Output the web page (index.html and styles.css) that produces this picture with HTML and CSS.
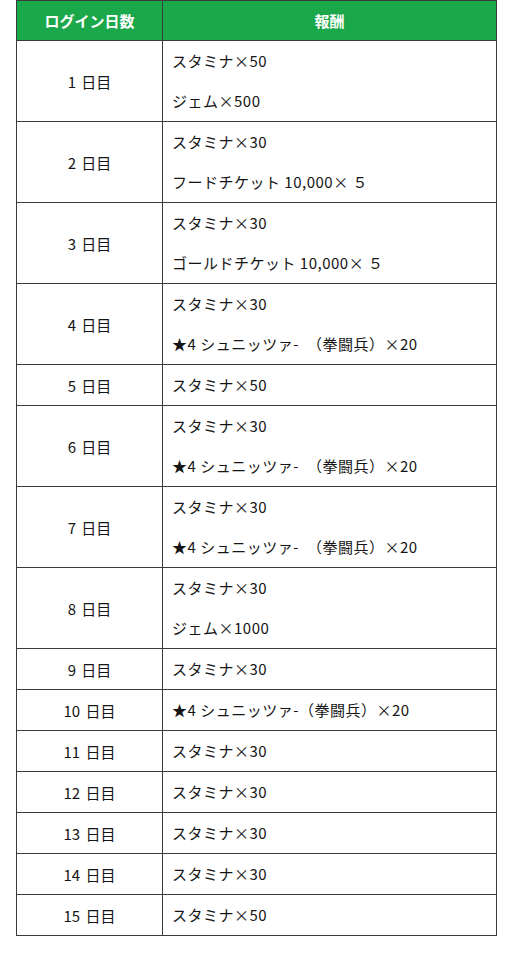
FILE: index.html
```html
<!DOCTYPE html>
<html lang="ja">
<head>
<meta charset="utf-8">
<link rel="stylesheet" href="styles.css">
</head>
<body>
<table class="rewards">
  <thead>
    <tr><th class="day-col">ログイン日数</th><th class="reward-col">報酬</th></tr>
  </thead>
  <tbody>
    <tr><td class="day">1 日目</td><td class="reward"><div class="line">スタミナ×50</div><div class="line">ジェム×500</div></td></tr>
    <tr><td class="day">2 日目</td><td class="reward"><div class="line">スタミナ×30</div><div class="line">フードチケット 10,000× ５</div></td></tr>
    <tr><td class="day">3 日目</td><td class="reward"><div class="line">スタミナ×30</div><div class="line">ゴールドチケット 10,000× ５</div></td></tr>
    <tr><td class="day">4 日目</td><td class="reward"><div class="line">スタミナ×30</div><div class="line">★4 シュニッツァ-　（拳闘兵）×20</div></td></tr>
    <tr><td class="day">5 日目</td><td class="reward"><div class="line">スタミナ×50</div></td></tr>
    <tr><td class="day">6 日目</td><td class="reward"><div class="line">スタミナ×30</div><div class="line">★4 シュニッツァ-　（拳闘兵）×20</div></td></tr>
    <tr><td class="day">7 日目</td><td class="reward"><div class="line">スタミナ×30</div><div class="line">★4 シュニッツァ-　（拳闘兵）×20</div></td></tr>
    <tr><td class="day">8 日目</td><td class="reward"><div class="line">スタミナ×30</div><div class="line">ジェム×1000</div></td></tr>
    <tr><td class="day">9 日目</td><td class="reward"><div class="line">スタミナ×30</div></td></tr>
    <tr><td class="day">10 日目</td><td class="reward"><div class="line">★4 シュニッツァ-（拳闘兵）×20</div></td></tr>
    <tr><td class="day">11 日目</td><td class="reward"><div class="line">スタミナ×30</div></td></tr>
    <tr><td class="day">12 日目</td><td class="reward"><div class="line">スタミナ×30</div></td></tr>
    <tr><td class="day">13 日目</td><td class="reward"><div class="line">スタミナ×30</div></td></tr>
    <tr><td class="day">14 日目</td><td class="reward"><div class="line">スタミナ×30</div></td></tr>
    <tr><td class="day">15 日目</td><td class="reward"><div class="line">スタミナ×50</div></td></tr>
  </tbody>
</table>
</body>
</html>
```
FILE: styles.css
```css
html, body {
  margin: 0;
  padding: 0;
  background: #fff;
}
body {
  padding-left: 16px;
  font-family: "Noto Sans CJK JP", "Noto Sans", sans-serif;
  color: #151515;
}
.rewards {
  border-collapse: collapse;
  width: 481px;
  table-layout: fixed;
}
.rewards th, .rewards td {
  border: 1px solid #3a3a3a;
  padding: 0;
}
.rewards th {
  background: #1ba84a;
  color: #fff;
  font-weight: bold;
  font-size: 15px;
  height: 39px;
  line-height: 39px;
  text-align: center;
}
.day-col { width: 145px; }
.day {
  text-align: center;
  font-size: 15px;
  vertical-align: middle;
  word-spacing: 2px;
}
.reward {
  font-size: 15px;
  padding-left: 9px !important;
}
.line {
  height: 40px;
  line-height: 40px;
  white-space: nowrap;
  letter-spacing: 0.5px;
}
```
